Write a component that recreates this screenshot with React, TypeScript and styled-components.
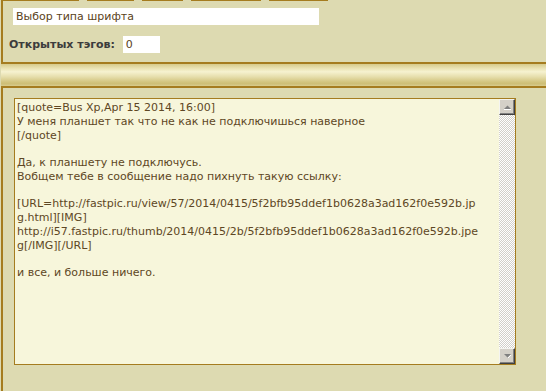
import React from "react";
import styled, { createGlobalStyle } from "styled-components";

const Global = createGlobalStyle`
  html, body { margin: 0; padding: 0; background: #DDDAB1; }
  body { font-family: "DejaVu Sans", Verdana, sans-serif; font-size: 11px; }
  #root { padding-left: 1px; }
`;

const Page = styled.div`
  display: flex;
  flex-direction: column;
  height: 391px;
  overflow: hidden;
`;

const TopPanel = styled.div`
  border-left: 2px solid #A57C1F;
  height: 62px;
  display: flex;
  flex-direction: column;
`;

const ButtonRow = styled.div`
  display: flex;
  height: 1px;
`;

const EdgeButton = styled.div<{ $w: number; $gap: number }>`
  width: ${(p) => p.$w}px;
  margin-left: ${(p) => p.$gap}px;
  border-bottom: 1px solid #A57C1F;
`;

const FontSelect = styled.div`
  margin: 7px 0 0 10px;
  width: 303px;
  height: 17px;
  background: #fff;
  color: #5A4220;
  padding-left: 3px;
  line-height: 17px;
  font-size: 11px;
`;

const TagRow = styled.div`
  display: flex;
  align-items: center;
  margin: 11px 0 0 6px;
  gap: 8px;
`;

const TagLabel = styled.span`
  font-weight: bold;
  color: #3C3C3C;
  font-size: 11px;
`;

const TagCount = styled.div`
  width: 34px;
  height: 17px;
  background: #fff;
  color: #5A4220;
  padding-left: 3px;
  line-height: 17px;
`;

const Divider = styled.div`
  border-top: 2px solid #A57C1F;
  border-bottom: 2px solid #A57C1F;
  height: 22px;
  background: linear-gradient(
    to bottom,
    #D6CB8C 0%,
    #EAE3B4 20%,
    #F6F2D0 35%,
    #E6DEAC 58%,
    #D2C47E 82%,
    #CDBE76 90%,
    #D8CC8E 100%
  );
`;

const BottomPanel = styled.div`
  flex: 1;
  border-left: 2px solid #A57C1F;
  padding: 10px 0 0 11px;
`;

const TextBox = styled.div`
  width: 500px;
  height: 265px;
  border: 1px solid #A57C1F;
  background: #F7F6DB;
  display: flex;
`;

const Content = styled.div`
  flex: 1;
  padding: 2px 0 0 2px;
  color: #5E4724;
  font-size: 11px;
  line-height: 13.75px;
  white-space: pre;
  overflow: hidden;
`;

const Scrollbar = styled.div`
  width: 16px;
  display: flex;
  flex-direction: column;
  background: repeating-conic-gradient(#D2D0CA 0 25%, #FFFFFF 0 50%) 0 0 / 2px 2px;
`;

const ScrollButton = styled.div`
  width: 16px;
  height: 16px;
  box-sizing: border-box;
  background: #D4D0C8;
  border-top: 1px solid #F4F4F0;
  border-left: 1px solid #F4F4F0;
  border-right: 1px solid #404040;
  border-bottom: 1px solid #404040;
  box-shadow: inset -1px -1px 0 #808080;
  display: flex;
  align-items: center;
  justify-content: center;
`;

const Track = styled.div`
  flex: 1;
`;

const Arrow = ({ up }: { up?: boolean }) => (
  <svg width="9" height="6" viewBox="0 0 9 6">
    {up ? (
      <>
        <path d="M1 5 H8 L4.5 1.5 Z" fill="#808080" />
        <path d="M1 5.5 H8" stroke="#FFFFFF" strokeWidth="1" />
      </>
    ) : (
      <>
        <path d="M1 1 H8 L4.5 4.5 Z" fill="#808080" />
        <path d="M5 5 L8 2" stroke="#FFFFFF" strokeWidth="1" />
      </>
    )}
  </svg>
);

const lines = [
  "[quote=Bus Xp,Apr 15 2014, 16:00]",
  "У меня планшет так что не как не подключишься наверное",
  "[/quote]",
  "",
  "Да, к планшету не подключусь.",
  "Вобщем тебе в сообщение надо пихнуть такую ссылку:",
  "",
  "[URL=http://fastpic.ru/view/57/2014/0415/5f2bfb95ddef1b0628a3ad162f0e592b.jp",
  "g.html][IMG]",
  "http://i57.fastpic.ru/thumb/2014/0415/2b/5f2bfb95ddef1b0628a3ad162f0e592b.jpe",
  "g[/IMG][/URL]",
  "",
  "и все, и больше ничего.",
];

const buttons = [
  { w: 76, gap: 0 },
  { w: 47, gap: 8 },
  { w: 41, gap: 8 },
  { w: 70, gap: 8 },
  { w: 59, gap: 8 },
];

export default function App() {
  return (
    <Page>
      <Global />
      <TopPanel>
        <ButtonRow>
          {buttons.map((b, i) => (
            <EdgeButton key={i} $w={b.w} $gap={b.gap} />
          ))}
        </ButtonRow>
        <FontSelect>Выбор типа шрифта</FontSelect>
        <TagRow>
          <TagLabel>Открытых тэгов:</TagLabel>
          <TagCount>0</TagCount>
        </TagRow>
      </TopPanel>
      <Divider />
      <BottomPanel>
        <TextBox>
          <Content>
            {lines.map((l, i) => (
              <div key={i}>{l || "\u00a0"}</div>
            ))}
          </Content>
          <Scrollbar>
            <ScrollButton>
              <Arrow up />
            </ScrollButton>
            <Track />
            <ScrollButton>
              <Arrow />
            </ScrollButton>
          </Scrollbar>
        </TextBox>
      </BottomPanel>
    </Page>
  );
}
